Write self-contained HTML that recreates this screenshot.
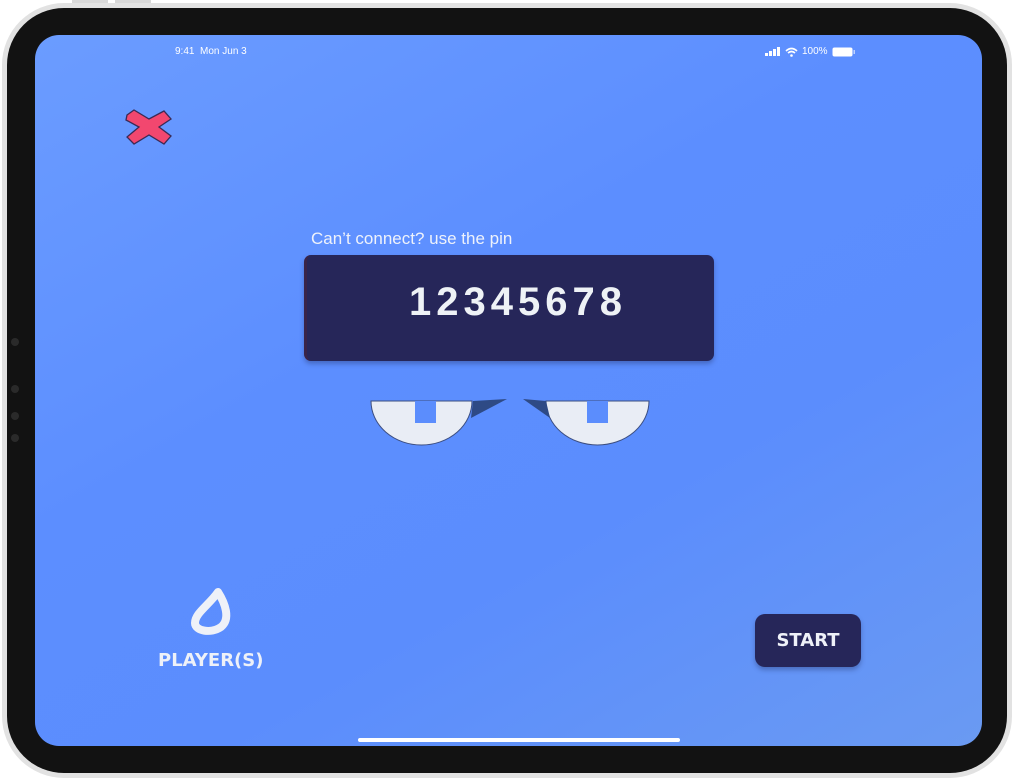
<!DOCTYPE html>
<html><head><style>
body{margin:0;width:1014px;height:781px;background:#fff;position:relative;overflow:hidden;font-family:"Liberation Sans",sans-serif}
.outer{position:absolute;left:2px;top:3px;width:1010px;height:775px;border-radius:62px;background:#e2e2e2}
.bezel{position:absolute;left:7px;top:8px;width:1000px;height:765px;border-radius:57px;background:#121212}
.screen{position:absolute;left:35px;top:35px;width:947px;height:711px;border-radius:24px;overflow:hidden;background:linear-gradient(150deg,#6b9cff 0%,#5c8eff 40%,#5b8dfd 65%,#6a9af2 100%)}
.abs{position:absolute}
</style></head><body>
<div class="abs" style="left:72px;top:0;width:36px;height:4px;background:#d8d8d8"></div>
<div class="abs" style="left:115px;top:0;width:36px;height:4px;background:#d8d8d8"></div>
<div class="outer"></div>
<div class="bezel"></div>
<div class="abs" style="left:11px;top:338px;width:8px;height:8px;border-radius:50%;background:#2a2a2a"></div>
<div class="abs" style="left:11px;top:385px;width:8px;height:8px;border-radius:50%;background:#2a2a2a"></div>
<div class="abs" style="left:11px;top:412px;width:8px;height:8px;border-radius:50%;background:#2a2a2a"></div>
<div class="abs" style="left:11px;top:434px;width:8px;height:8px;border-radius:50%;background:#2a2a2a"></div>
<div class="screen">
 <div class="abs" style="left:140px;top:11px;font-size:10px;color:#fff">9:41&nbsp; Mon Jun 3</div>
 <div class="abs" style="left:730px;top:11px;font-size:10px;color:#fff;display:flex;align-items:center;gap:4px">
  <svg width="16" height="9"><rect x="0" y="6" width="3" height="3" fill="#fff"/><rect x="4" y="4" width="3" height="5" fill="#fff"/><rect x="8" y="2" width="3" height="7" fill="#fff"/><rect x="12" y="0" width="3" height="9" fill="#fff"/></svg>
  <svg width="13" height="10"><path d="M1 4 Q6.5 -1 12 4 M3 6 Q6.5 3 10 6" stroke="#fff" stroke-width="1.6" fill="none"/><circle cx="6.5" cy="8.5" r="1.3" fill="#fff"/></svg>
  <span>100%</span>
  <svg width="24" height="10"><rect x="0.5" y="0.5" width="20" height="9" rx="2" fill="#fff"/><rect x="21.5" y="3" width="1.5" height="4" fill="#fff" opacity=".6"/></svg>
 </div>
 <svg class="abs" style="left:90px;top:72px" width="50" height="40"><path d="M2 8 L9 3 L24 12 L39 4 L46 12 L34 20 L46 29 L39 37 L24 28 L9 37 L2 30 L14 20 L1 13 Z" fill="#f2476f" stroke="#3a2a55" stroke-width="1.3"/></svg>
 <div class="abs" style="left:276px;top:194px;font-size:17px;color:#eef2fb">Can’t connect? use the pin</div>
 <div class="abs" style="left:269px;top:220px;width:410px;height:106px;background:#262659;border-radius:7px;border-left:3px solid #3a2448;box-shadow:0 3px 5px rgba(30,40,90,.35);box-sizing:border-box"></div>
 <div class="abs" style="left:269px;top:245px;width:410px;text-align:center;font-size:40px;font-weight:bold;color:#eef2f6;letter-spacing:5px;padding-left:18px;box-sizing:border-box">12345678</div>
 <svg class="abs" style="left:330px;top:360px" width="290" height="55">
  <path d="M6 6 H107 A50.5 44 0 0 1 6 6 Z" fill="#e9edf5" stroke="#3c4e80" stroke-width="1"/>
  <rect x="50" y="6" width="21" height="22" fill="#5b8dfd"/>
  <path d="M108 6 L142 4 L106 23 Z" fill="#2e4a85"/>
  <path d="M181 6 H284 A51.5 44 0 0 1 181 6 Z" fill="#e9edf5" stroke="#3c4e80" stroke-width="1"/>
  <rect x="222" y="6" width="21" height="22" fill="#5b8dfd"/>
  <path d="M181 6 L158 4 L185 23 Z" fill="#2e4a85"/>
 </svg>
 <svg class="abs" style="left:150px;top:548px" width="50" height="55"><path d="M33 9 C40 20 46 36 36 44 C26 51 10 48 10 40 C10 30 24 22 33 9 Z" fill="none" stroke="#eef1f8" stroke-width="8" stroke-linejoin="round"/></svg>
 <div class="abs" style="left:123px;top:615px;font-size:18px;font-weight:bold;color:#eef1f8;font-family:'DejaVu Sans',sans-serif">PLAYER(S)</div>
 <div class="abs" style="left:720px;top:579px;width:106px;height:53px;background:#262659;border-radius:10px;box-shadow:0 3px 5px rgba(30,40,90,.35);color:#eef1f8;font-weight:bold;font-size:18px;text-align:center;line-height:53px;font-family:'DejaVu Sans',sans-serif">START</div>
 <div class="abs" style="left:323px;top:703px;width:322px;height:4px;border-radius:2px;background:#fff"></div>
</div>
</body></html>
